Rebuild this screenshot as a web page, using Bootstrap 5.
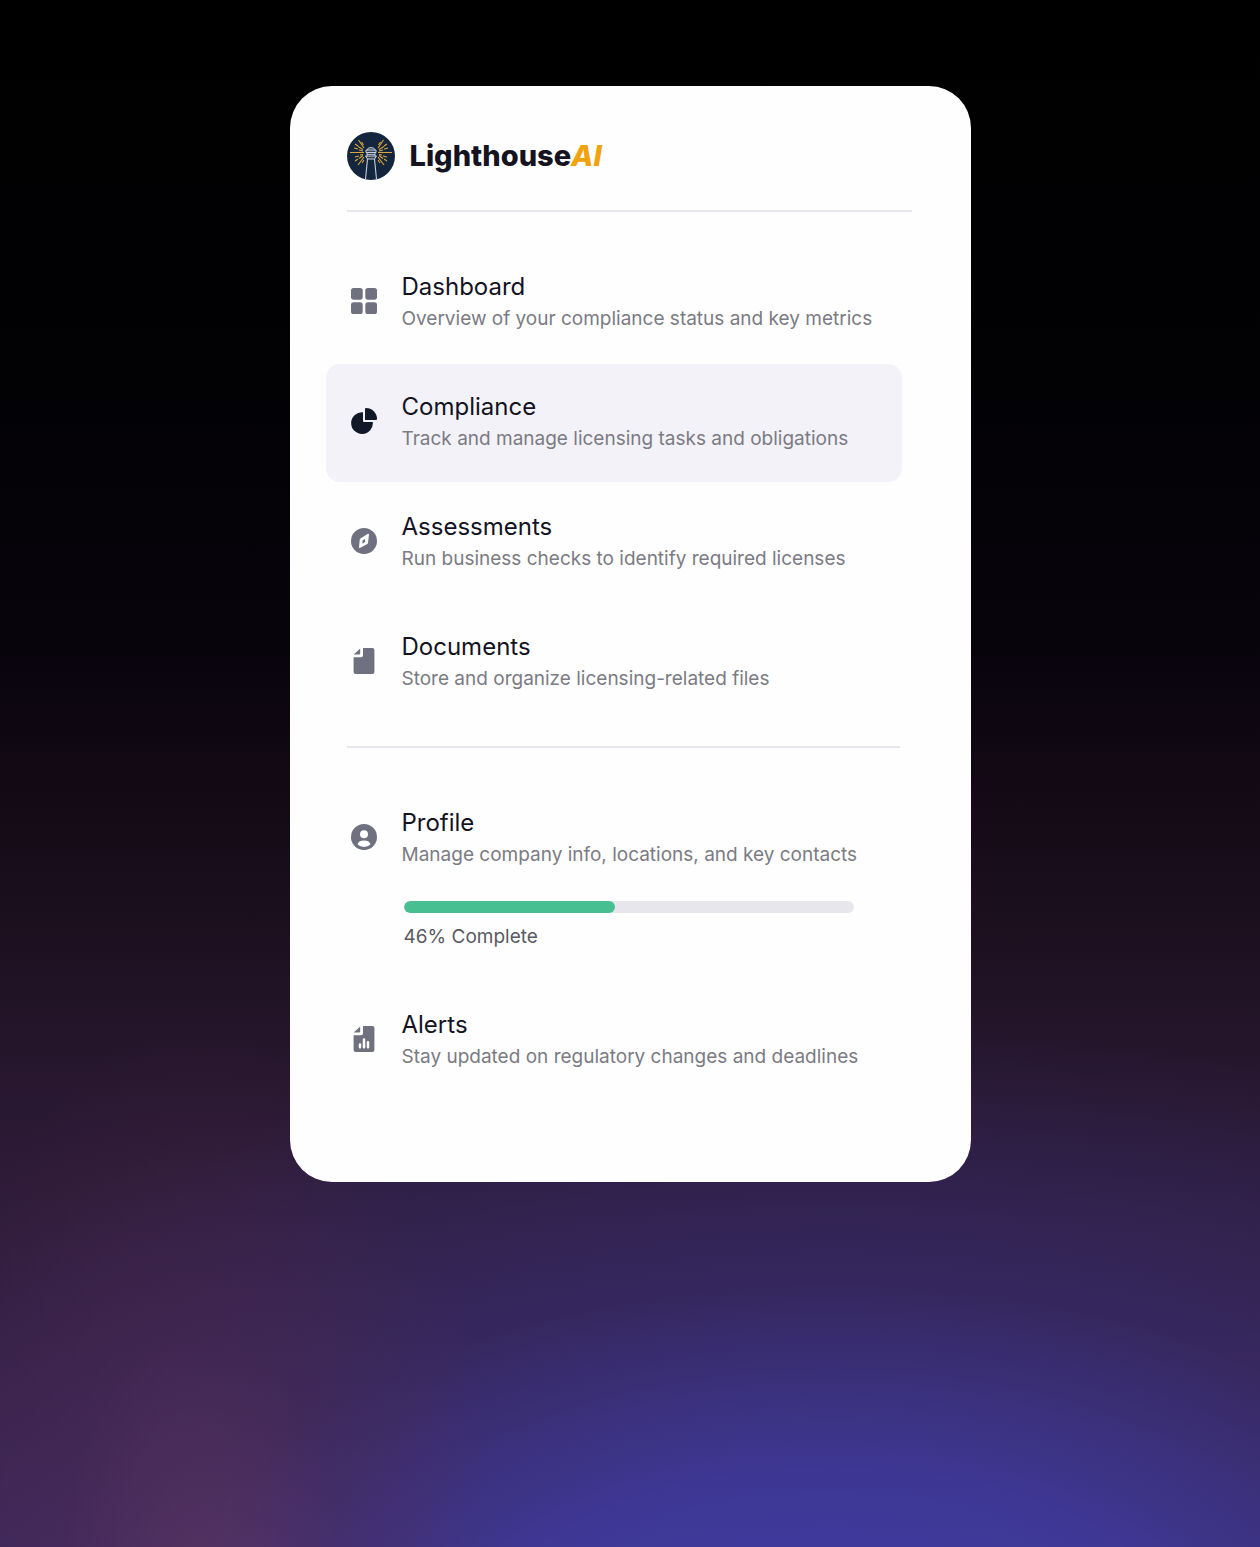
<!DOCTYPE html>
<html lang="en">
<head>
<meta charset="utf-8">
<meta name="viewport" content="width=device-width, initial-scale=1">
<title>LighthouseAI</title>
<link href="https://cdn.jsdelivr.net/npm/bootstrap@5.3.0/dist/css/bootstrap.min.css" rel="stylesheet">
<style>
  body {
    font-family: Inter, sans-serif;
    color: #14131f;
    background:
      radial-gradient(ellipse 24% 40% at 16% 106%, rgba(106, 56, 92, .6), rgba(90, 44, 74, .24) 50%, rgba(80, 30, 60, 0)),
      radial-gradient(ellipse 90% 42% at 66% 108%, rgba(62, 62, 172, .96), rgba(62, 60, 164, .8) 32%, rgba(54, 50, 130, .45) 60%, rgba(42, 34, 84, 0)),
      linear-gradient(#000 0%, #020104 25%, #08040c 42%, #120914 50%, #1c101f 60%, #28172f 70%, #2f1c3b 78%, #3a2145 92%, #3f2450 100%);
    background-repeat: no-repeat;
  }
  .page-area { padding: 86px 16px; }
  .menu-panel { max-width: 681px; border-radius: 42px; padding: 46px 69px 82px 36px; background: #fefefe; }
  .panel-head { margin: 0 -10px 32px 21px; padding-bottom: 30px; border-bottom: 2px solid #e6e6ec; }
  .brand-link { gap: 15px; }
  .brand-name { font-size: 29px; line-height: 48px; font-weight: 800; color: #14131f; }
  .brand-name em { color: #f0a30a; }
  .menu-list { gap: 2px; }
  .menu-item { padding: 27px 25px; gap: 25px; border-radius: 14px; color: #6f7080; text-decoration: none; }
  .menu-item.active { background: #f3f2f8; color: #111827; }
  .menu-icon { width: 26px; height: 26px; margin-top: 17px; fill: currentColor; }
  .item-title { font-size: 24px; line-height: 32px; color: #14131f; }
  .item-note { font-size: 19px; line-height: 32px; color: #7b7b83; }
  .split { height: 2px; margin: 24px 2px 32px 21px; background: #e6e6ec; }
  .meter { margin: 30px 0 8px 2px; }
  .meter .progress { height: 12px; border-radius: 6px; background: #e6e6ec; width: 450px; max-width: 100%; }
  .meter .progress-bar { border-radius: 6px; background: #48bf91; }
  .meter-label { margin-left: 2px; font-size: 19px; line-height: 32px; color: #5a5a62; }
</style>
</head>
<body class="min-vh-100">
<main class="page-area container-fluid">
  <div class="menu-panel mx-auto">
    <header class="panel-head">
      <a href="#" class="brand-link d-flex align-items-center text-decoration-none">
        <svg width="48" height="48" viewBox="0 0 48 48" fill="none" aria-hidden="true">
          <circle cx="24" cy="24" r="24" fill="#14263e"/>
          <g stroke="#dca63a" stroke-width="1.1">
            <path d="M3 20.500H17M31 20.500H45M11.500 8l5.500 8M36.500 8l-5.500 8M11 33l6-8M37 33l-6-8"/>
            <path d="M8 12l3 2M11 14.500l5 3M7 16l4 1M12 18l4 1M14.500 10l2 3M8 25l4-1M13 23l3-.5M8 29l3-2M12 26.500l4-3M15 31l2-3M40 12l-3 2M37 14.500l-5 3M41 16l-4 1M36 18l-4 1M33.500 10l-2 3M40 25l-4-1M35 23l-3-.5M40 29l-3-2M36 26.500l-4-3M33 31l-2-3"/>
          </g>
          <path d="M20.500 27L18.500 47.300M27.500 27l2 20.300" stroke="#c5cfdd" stroke-width="1.100"/>
          <path d="M20 18q.5-2.500 4-2.500t4 2.500M19 18h10v2.500H19zM20 20.500v4M28 20.500v4M18.500 24h11l-2 3h-7zM20 22.300h8" fill="#35455d" stroke="#c5cfdd"/>
        </svg>
        <span class="brand-name">Lighthouse<em>AI</em></span>
      </a>
    </header>

    <nav class="menu-list d-flex flex-column" aria-label="Main">
      <a href="#" class="menu-item d-flex align-items-start">
        <svg class="menu-icon flex-shrink-0" viewBox="0 0 26 26" aria-hidden="true"><rect width="11.700" height="11.700" rx="2.600"/><rect x="14.300" width="11.700" height="11.700" rx="2.600"/><rect y="14.300" width="11.700" height="11.700" rx="2.600"/><rect x="14.300" y="14.300" width="11.700" height="11.700" rx="2.600"/></svg>
        <span><span class="item-title d-block">Dashboard</span><span class="item-note d-block">Overview of your compliance status and key metrics</span></span>
      </a>
      <a href="#" class="menu-item active d-flex align-items-start" aria-current="page">
        <svg class="menu-icon flex-shrink-0" viewBox="0 0 26 26" aria-hidden="true"><path d="M12 4.300a10.850 10.850 0 1 0 9.800 9.700H13a1 1 0 0 1-1-1z"/><path d="M14 1a1 1 0 0 1 1-1 11 11 0 0 1 11 11 1 1 0 0 1-1 1H14z"/></svg>
        <span><span class="item-title d-block">Compliance</span><span class="item-note d-block">Track and manage licensing tasks and obligations</span></span>
      </a>
      <a href="#" class="menu-item d-flex align-items-start">
        <svg class="menu-icon flex-shrink-0" viewBox="0 0 26 26" aria-hidden="true"><path fill-rule="evenodd" d="M13 0a13 13 0 1 0 0 26 13 13 0 0 0 0-26zM18 6.400l-1 8.400q-.1.700-.7 1.200L8.900 19.900q-.9.400-.9-.7l.7-7.300q.1-.8.700-1.300L17 5.800q.9-.5 1 .6zM13.700 11l-2.100 1.600-.3 2.800 1.500-.5 1.500-1.500z"/></svg>
        <span><span class="item-title d-block">Assessments</span><span class="item-note d-block">Run business checks to identify required licenses</span></span>
      </a>
      <a href="#" class="menu-item d-flex align-items-start">
        <svg class="menu-icon flex-shrink-0" viewBox="0 0 26 26" aria-hidden="true"><path d="M12 0h9.400a2 2 0 0 1 2 2v22a2 2 0 0 1-2 2H4.600a2 2 0 0 1-2-2V9.200H10a2 2 0 0 0 2-2z"/><path d="M2.800 6.600 9.200.4v5.200a1 1 0 0 1-1 1z"/></svg>
        <span><span class="item-title d-block">Documents</span><span class="item-note d-block">Store and organize licensing-related files</span></span>
      </a>
    </nav>

    <div class="split"></div>

    <nav class="menu-list d-flex flex-column" aria-label="Account">
      <a href="#" class="menu-item d-flex align-items-start">
        <svg class="menu-icon flex-shrink-0" viewBox="0 0 26 26" aria-hidden="true"><circle cx="13" cy="13" r="13"/><circle cx="13" cy="10.300" r="4" fill="#fefefe"/><path d="M6.600 20.600q.6-4.200 6.400-4.200t6.400 4.200q-2.600 2.300-6.400 2.300t-6.400-2.300z" fill="#fefefe"/></svg>
        <span class="flex-grow-1">
          <span class="item-title d-block">Profile</span>
          <span class="item-note d-block">Manage company info, locations, and key contacts</span>
          <span class="meter d-block"><span class="progress" role="progressbar" aria-label="Profile completion" aria-valuenow="46" aria-valuemin="0" aria-valuemax="100"><span class="progress-bar" style="width: 47%"></span></span></span>
          <span class="meter-label d-block">46% Complete</span>
        </span>
      </a>
      <a href="#" class="menu-item d-flex align-items-start">
        <svg class="menu-icon flex-shrink-0" viewBox="0 0 26 26" aria-hidden="true"><path d="M12 0h9.400a2 2 0 0 1 2 2v22a2 2 0 0 1-2 2H4.600a2 2 0 0 1-2-2V9.200H10a2 2 0 0 0 2-2z"/><path d="M2.800 6.600 9.200.4v5.200a1 1 0 0 1-1 1z"/><path d="M9 18.500v2.800M13 13.500v7.800M17 16.200v5.100" stroke="#fefefe" stroke-width="2.500" stroke-linecap="round"/></svg>
        <span><span class="item-title d-block">Alerts</span><span class="item-note d-block">Stay updated on regulatory changes and deadlines</span></span>
      </a>
    </nav>
  </div>
</main>
<script src="https://cdn.jsdelivr.net/npm/bootstrap@5.3.0/dist/js/bootstrap.bundle.min.js"></script>
</body>
</html>
